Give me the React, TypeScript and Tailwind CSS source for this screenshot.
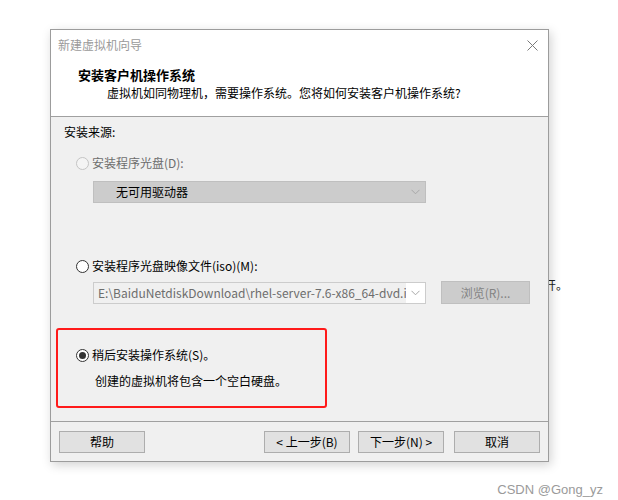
import React from 'react';

const font = { fontFamily: '"Noto Sans CJK SC", "Microsoft YaHei", sans-serif' };

function Radio({ checked = false, disabled = false }: { checked?: boolean; disabled?: boolean }) {
  return (
    <span
      className={
        'w-[13px] h-[13px] rounded-full border flex items-center justify-center flex-shrink-0 ' +
        (disabled ? 'border-[#c4c4c4] bg-[#f4f4f4]' : 'border-[#333333] bg-white')
      }
    >
      {checked && <span className="w-[7px] h-[7px] rounded-full bg-[#333333]" />}
    </span>
  );
}

function Chevron({ color = '#a8a8a8' }: { color?: string }) {
  return (
    <svg width="9" height="6" viewBox="0 0 9 6" fill="none">
      <path d="M0.5 0.8 L4.5 4.8 L8.5 0.8" stroke={color} strokeWidth="1" />
    </svg>
  );
}

function WinButton({ children }: { children: React.ReactNode }) {
  return (
    <button className="w-[86px] h-[22px] bg-[#e1e1e1] border border-[#adadad] text-[12px] leading-none text-black flex items-center justify-center">
      {children}
    </button>
  );
}

export default function App() {
  return (
    <div className="relative w-[618px] h-[500px] bg-white overflow-hidden" style={font}>
      <span className="absolute left-[544px] top-[277px] text-[12px] leading-[16px] text-[#222]">开。</span>

      <div className="pt-[29px] pl-[50px]">
        <div className="relative z-10 w-[499px] h-[433px] border border-[#9c9c9c] bg-[#f0f0f0] flex flex-col shadow-[2px_3px_10px_rgba(0,0,0,0.18)]">
          {/* title + header */}
          <div className="bg-white border-b border-[#a0a0a0]">
            <div className="h-[30px] flex items-center justify-between pl-[7px] pr-[10px]">
              <span className="text-[12px] leading-[16px] text-[#9a9a9a]">新建虚拟机向导</span>
              <svg width="11" height="11" viewBox="0 0 11 11">
                <path d="M0.5 0.5 L10.5 10.5 M10.5 0.5 L0.5 10.5" stroke="#7a7a7a" strokeWidth="1" />
              </svg>
            </div>
            <div className="pt-[6px] pb-[14px]">
              <p className="pl-[27px] text-[13px] leading-[18px] font-bold text-black">安装客户机操作系统</p>
              <p className="pl-[56px] text-[12px] leading-[18px] text-black">
                虚拟机如同物理机，需要操作系统。您将如何安装客户机操作系统?
              </p>
            </div>
          </div>

          {/* body */}
          <div className="flex-1 flex flex-col pl-[13px]">
            <p className="mt-[7px] text-[12px] leading-[16px] text-black">安装来源:</p>

            <div className="mt-[15px] ml-[12px] flex items-center gap-[3px] h-[16px]">
              <Radio disabled />
              <span className="text-[12px] leading-[16px] text-[#6d6d6d]">安装程序光盘(D):</span>
            </div>
            <div className="mt-[10px] ml-[29px] w-[333px] h-[22px] bg-[#cccccc] border border-[#bfbfbf] flex items-center justify-between pl-[22px] pr-[5px]">
              <span className="text-[12px] leading-[16px] text-black">无可用驱动器</span>
              <Chevron />
            </div>

            <div className="mt-[55px] ml-[12px] flex items-center gap-[3px] h-[16px]">
              <Radio />
              <span className="text-[12px] leading-[16px] text-black">安装程序光盘映像文件(iso)(M):</span>
            </div>
            <div className="mt-[7px] ml-[29px] flex items-center">
              <div className="w-[333px] h-[22px] bg-white border border-[#cccccc] flex items-center">
                <div className="w-[312px] h-[20px] bg-[#f0f0f0] overflow-hidden flex items-center pl-[4px]">
                  <span className="text-[12px] leading-[16px] text-[#6d6d6d] whitespace-nowrap">
                    E:\BaiduNetdiskDownload\rhel-server-7.6-x86_64-dvd.iso
                  </span>
                </div>
                <div className="flex-1 flex items-center justify-center">
                  <Chevron />
                </div>
              </div>
              <div className="ml-[15px] w-[89px] h-[23px] bg-[#cccccc] border border-[#bfbfbf] flex items-center justify-center">
                <span className="text-[12px] leading-[16px] text-[#838383]">浏览(R)...</span>
              </div>
            </div>

            <div className="mt-[24px] -ml-[8px] w-[271px] h-[80px] border-2 border-[#ff1a1a] rounded-[3px] flex flex-col pl-[18px]">
              <div className="mt-[17px] flex items-center gap-[3px] h-[16px]">
                <Radio checked />
                <span className="text-[12px] leading-[16px] text-black">稍后安装操作系统(S)。</span>
              </div>
              <p className="mt-[10px] ml-[19px] text-[12px] leading-[16px] text-black">创建的虚拟机将包含一个空白硬盘。</p>
            </div>
          </div>

          {/* footer */}
          <div className="h-[40px] border-t border-[#a0a0a0] flex items-start pt-[9px] pl-[8px] pr-[8px]">
            <WinButton>帮助</WinButton>
            <div className="ml-auto flex gap-[8px]">
              <WinButton>&lt; 上一步(B)</WinButton>
              <WinButton>下一步(N) &gt;</WinButton>
            </div>
            <div className="ml-[10px]">
              <WinButton>取消</WinButton>
            </div>
          </div>
        </div>

        <div className="mt-[13px] pr-[15px] text-right">
          <span className="text-[13px] leading-[16px] text-[#9a9a9a]" style={{ fontFamily: '"Liberation Sans", Arial, sans-serif' }}>
            CSDN @Gong_yz
          </span>
        </div>
      </div>
    </div>
  );
}
